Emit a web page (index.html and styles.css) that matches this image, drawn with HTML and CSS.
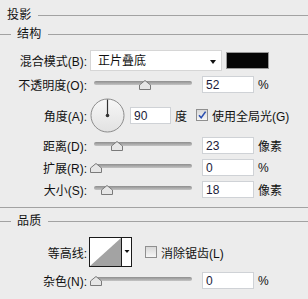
FILE: index.html
```html
<!DOCTYPE html>
<html lang="zh-CN">

<head>
    <meta charset="UTF-8">
    <title>投影</title>
    <link rel="stylesheet" href="styles.css">
</head>

<body>
    <div class="panel">
        <div class="legend first"><span class="legend-text">投影</span><i class="rule"></i></div>
        <div class="legend sub"><i class="rule lead"></i><span class="legend-text">结构</span><i class="rule"></i></div>

        <div class="row blend">
            <label class="lbl">混合模式(B):</label>
            <div class="select">正片叠底<span class="caret"></span></div>
            <div class="swatch"></div>
        </div>

        <div class="row">
            <label class="lbl">不透明度(O):</label>
            <div class="slider">
                <svg class="thumb" style="left:45px" width="12" height="10" viewBox="0 0 12 10"><polygon points="6,0.5 11.5,5 11.5,9.5 0.5,9.5 0.5,5" /></svg>
            </div>
            <div class="field">52</div>
            <span class="unit">%</span>
        </div>

        <div class="row angle">
            <label class="lbl">角度(A):</label>
            <svg class="dial" width="35" height="35" viewBox="0 0 35 35">
                <defs>
                    <linearGradient id="dialFill" x1="0" y1="0" x2="0" y2="1">
                        <stop offset="0" stop-color="#f7f7f7" />
                        <stop offset="1" stop-color="#e2e2e2" />
                    </linearGradient>
                </defs>
                <circle cx="17.5" cy="17.5" r="16.5" fill="url(#dialFill)" stroke="#8c8c8c" />
                <line x1="17.5" y1="1.5" x2="17.5" y2="17.5" stroke="#333" stroke-width="1.2" />
                <circle cx="17.5" cy="17.5" r="1.8" fill="#333" />
            </svg>
            <div class="field small">90</div>
            <span class="unit">度</span>
            <span class="check checked">
                <svg width="12" height="12" viewBox="0 0 12 12"><path d="M3 6.2 L5.2 8.8 L9.6 2.6" fill="none" stroke="#2b4fb0" stroke-width="1.6" /></svg>
            </span>
            <span class="check-label">使用全局光(G)</span>
        </div>

        <div class="row">
            <label class="lbl">距离(D):</label>
            <div class="slider">
                <svg class="thumb" style="left:17px" width="12" height="10" viewBox="0 0 12 10"><polygon points="6,0.5 11.5,5 11.5,9.5 0.5,9.5 0.5,5" /></svg>
            </div>
            <div class="field">23</div>
            <span class="unit">像素</span>
        </div>

        <div class="row">
            <label class="lbl">扩展(R):</label>
            <div class="slider">
                <svg class="thumb" style="left:-4px" width="12" height="10" viewBox="0 0 12 10"><polygon points="6,0.5 11.5,5 11.5,9.5 0.5,9.5 0.5,5" /></svg>
            </div>
            <div class="field">0</div>
            <span class="unit">%</span>
        </div>

        <div class="row">
            <label class="lbl">大小(S):</label>
            <div class="slider">
                <svg class="thumb" style="left:7px" width="12" height="10" viewBox="0 0 12 10"><polygon points="6,0.5 11.5,5 11.5,9.5 0.5,9.5 0.5,5" /></svg>
            </div>
            <div class="field">18</div>
            <span class="unit">像素</span>
        </div>

        <div class="divider"></div>

        <div class="legend quality"><i class="rule lead"></i><span class="legend-text">品质</span><i class="rule"></i></div>

        <div class="row contour-row">
            <label class="lbl">等高线:</label>
            <svg class="contour" width="43" height="30" viewBox="0 0 43 30">
                <rect x="0.5" y="0.5" width="42" height="29" fill="#fff" stroke="#1a1a1a" />
                <polygon points="1,29 32,1 32,29" fill="#a3a3a3" />
                <line x1="32.5" y1="0.5" x2="32.5" y2="29.5" stroke="#1a1a1a" />
                <polygon points="35.5,13 40.5,13 38,16" fill="#111" />
            </svg>
            <span class="check"></span>
            <span class="check-label">消除锯齿(L)</span>
        </div>

        <div class="row">
            <label class="lbl">杂色(N):</label>
            <div class="slider">
                <svg class="thumb" style="left:-4px" width="12" height="10" viewBox="0 0 12 10"><polygon points="6,0.5 11.5,5 11.5,9.5 0.5,9.5 0.5,5" /></svg>
            </div>
            <div class="field">0</div>
            <span class="unit">%</span>
        </div>
    </div>
</body>

</html>
```

FILE: styles.css
```css
body {
    margin: 0;
    background-color: #ececec;
    font-family: 'Liberation Sans', 'Noto Sans CJK SC', sans-serif;
    font-size: 12px;
    color: #111;
}

.panel {
    width: 308px;
    height: 299px;
    overflow: hidden;
}

/* group titles with the rule running across */
.legend {
    display: flex;
    align-items: center;
    height: 18px;
    line-height: 18px;
}

.legend.first {
    margin-top: 6px;
    padding-left: 7px;
}

.legend.sub {
    margin-top: 1px;
}

.legend.quality {
    margin-top: 4px;
}

.legend-text {
    font-size: 12px;
    letter-spacing: 0.2px;
}

.rule {
    flex: 1;
    height: 1px;
    background-color: #a2a2a2;
    margin-left: 7px;
}

.rule.lead {
    flex: none;
    width: 11px;
    margin-left: 0;
    margin-right: 6px;
}

.divider {
    height: 1px;
    background-color: #a2a2a2;
    margin-top: 9px;
}

/* form rows */
.row {
    display: flex;
    align-items: center;
    height: 17px;
    margin-top: 5px;
}

.row.blend {
    height: 21px;
    margin-top: 7px;
}

.row.angle {
    height: 34px;
}

.row.contour-row {
    height: 30px;
    margin-top: 7px;
}

.lbl {
    flex: none;
    width: 87px;
    text-align: right;
    white-space: nowrap;
}

.select {
    position: relative;
    box-sizing: border-box;
    width: 132px;
    height: 21px;
    margin-left: 3px;
    padding-left: 7px;
    line-height: 20px;
    background-color: #fff;
    border: 1px solid #d6d6d6;
}

.caret {
    position: absolute;
    right: 5px;
    top: 9px;
    width: 0;
    height: 0;
    border-left: 3.5px solid transparent;
    border-right: 3.5px solid transparent;
    border-top: 4px solid #111;
}

.swatch {
    box-sizing: border-box;
    width: 43px;
    height: 17px;
    margin-left: 4px;
    background-color: #060606;
    border: 1px solid #9a9a9a;
}

.slider {
    position: relative;
    flex: none;
    width: 98px;
    height: 17px;
    margin-left: 7px;
}

.slider::before {
    content: '';
    position: absolute;
    left: 0;
    right: 0;
    top: 5px;
    height: 4px;
    border-radius: 2px;
    background: linear-gradient(#8e8e8e, #c4c4c4);
}

.thumb {
    position: absolute;
    top: 4px;
}

.thumb polygon {
    fill: #e6e6e6;
    stroke: #7a7a7a;
    stroke-width: 1;
}

.field {
    box-sizing: border-box;
    flex: none;
    width: 52px;
    height: 17px;
    margin-left: 10px;
    padding-left: 3px;
    line-height: 16px;
    background-color: #fff;
    border: 1px solid #cfd2d6;
    color: #1b1b3a;
}

.field.small {
    width: 41px;
    height: 17px;
    margin-left: 5px;
}

.unit {
    margin-left: 4px;
}

.dial {
    flex: none;
    margin-left: 3px;
}

.check {
    box-sizing: border-box;
    flex: none;
    width: 12px;
    height: 12px;
    margin-left: 13px;
    border: 1px solid #8f8f8f;
    background: linear-gradient(#d8d8d8, #f6f6f6);
}

.check.checked {
    margin-left: 9px;
}

.check svg {
    display: block;
    margin: -1px 0 0 -1px;
}

.check-label {
    margin-left: 4px;
}

.contour {
    flex: none;
    margin-left: 2px;
}
```
